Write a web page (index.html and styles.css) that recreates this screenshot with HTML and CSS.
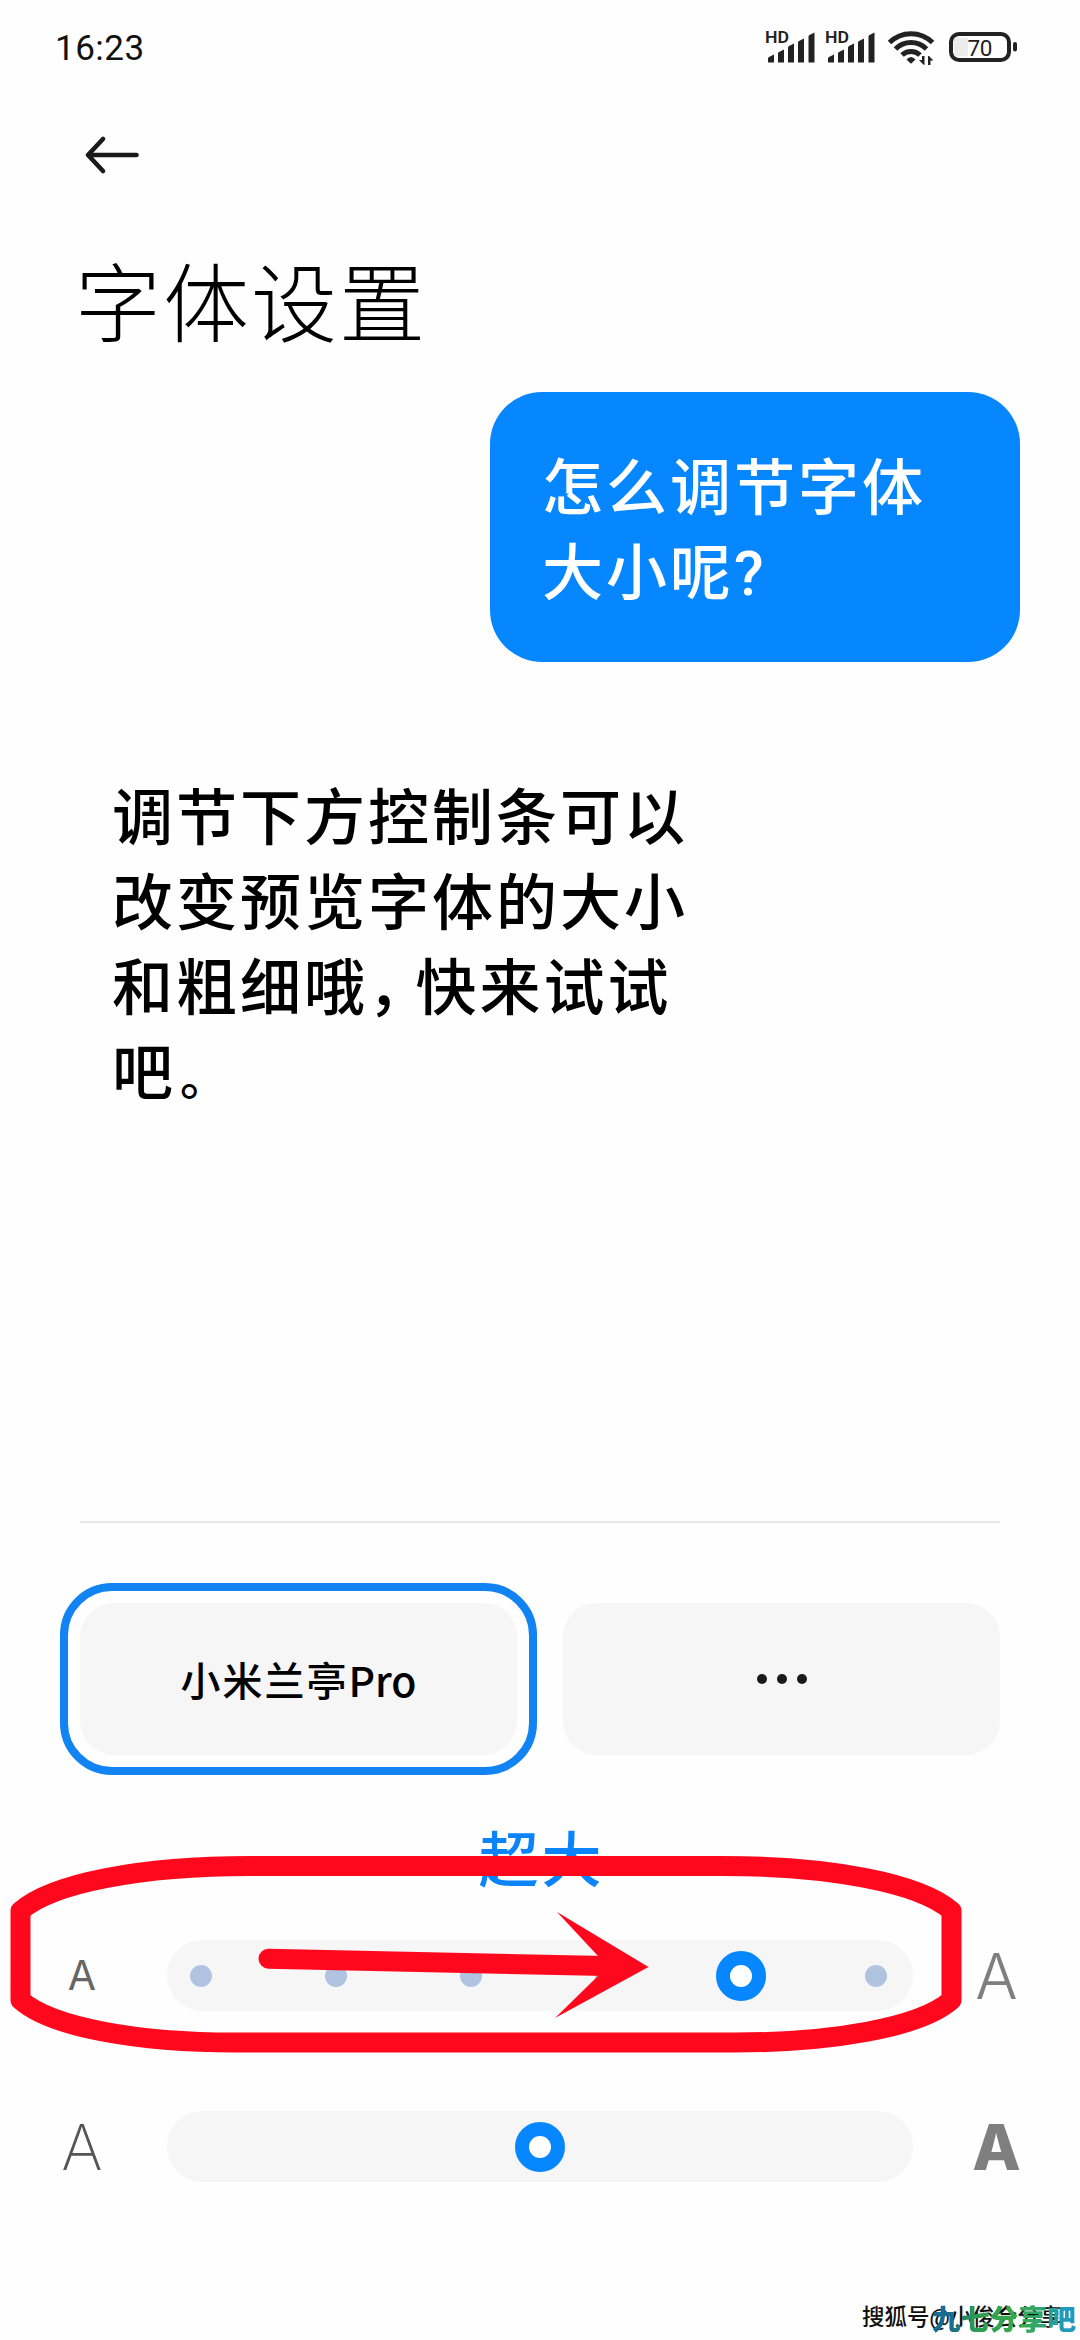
FILE: index.html
```html
<!DOCTYPE html>
<html lang="zh-CN">
<head>
  <meta charset="UTF-8" />
  <title>字体设置</title>
  <link rel="stylesheet" href="styles.css">
</head>
<body>

  <div class="status-bar">
    <span class="time">16:23</span>
    <svg class="status-icons" width="260" height="44" viewBox="764 25 260 44">
      <g id="signal">
        <text class="hd" x="765" y="43" textLength="24" lengthAdjust="spacingAndGlyphs">HD</text>
        <path d="M768 62.5v-4q0-1 1-1.500l5-2.500v8zM778 62.500v-9q0-1 1-1.500l5-2.500v13zM788 62.500v-15q0-1 1-1.500l5-2.500v19zM798 62.500v-20q0-1 1-1.500l5-2.500v24zM808.500 62.500v-26q0-1 1-1.500l5-2.500v30z" />
      </g>
      <use href="#signal" x="60" />
      <g class="wifi">
        <path d="M889.500 42.500A30.500 30.500 0 0 1 932.500 42.500" />
        <path d="M895.500 49A22 22 0 0 1 926.500 49" />
        <path d="M902 55A13 13 0 0 1 920 55" />
      </g>
      <path d="M906.500 59.500Q911 54.500 915.500 59.500L911 63.800z" />
      <path d="M924.500 56v8.800h-1L919 60h3v-4zM928 65v-9h1l4.500 4.500h-3V65z" />
      <rect class="battery" x="951" y="34" width="58" height="26" rx="8" />
      <rect class="charge" x="954" y="37.500" width="14" height="19" rx="3" />
      <rect x="1013" y="42" width="4" height="9.500" rx="2" />
      <text class="percent" x="967.500" y="55.500" textLength="25">70</text>
    </svg>
  </div>

  <div class="back">
    <svg width="56" height="40" viewBox="0 0 56 40">
      <path d="M52.500 20H4M19 4L4 20l15 16" />
    </svg>
  </div>

  <h1 class="title">字体设置</h1>

  <div class="preview">
    <div class="question">怎么调节字体<br>大小呢?</div>
    <div class="answer">调节下方控制条可以<br>改变预览字体的大小<br>和粗细哦<span class="comma">，</span>快来试试<br>吧<span class="period">。</span></div>
  </div>

  <div class="fonts">
    <div class="font-ring">
      <div class="font-card">小米兰亭<span class="latin">Pro</span></div>
    </div>
    <div class="font-card more"><i></i><i></i><i></i></div>
  </div>

  <div class="size-name">超大</div>

  <div class="slider">
    <span class="letter small">A</span>
    <div class="track stops">
      <span class="stop"></span>
      <span class="stop"></span>
      <span class="stop"></span>
      <span class="stop"></span>
      <span class="thumb"></span>
      <span class="stop"></span>
    </div>
    <span class="letter large">A</span>
  </div>

  <div class="slider weight">
    <span class="letter thin">A</span>
    <div class="track"><span class="thumb"></span></div>
    <span class="letter bold">A</span>
  </div>

  <!-- red marker around the size slider -->
  <svg class="marker" width="1080" height="220" viewBox="0 1840 1080 220">
    <path class="loop" d="M250 1866H722C830 1866 920 1883 951.500 1911V2000C920 2028 830 2042.500 735 2042.500H235C140 2042.500 52 2028 20.500 2000V1911C52 1883 142 1866 250 1866z" />
    <path class="shaft" d="M268.500 1958.700L605 1966" />
    <path class="head" d="M557 1912L648.500 1967L555 2018L598 1976V1956z" />
  </svg>

  <div class="source">搜狐号@小俊会分享</div>
  <div class="site">九七分享吧</div>

</body>
</html>
```
FILE: styles.css
```css
* {
  box-sizing: border-box;
}
body {
  margin: 0;
  position: relative;
  width: 1080px;
  height: 2340px;
  overflow: hidden;
  background: #fefefe;
  color: #000;
  font-family: Roboto, "Noto Sans CJK SC", sans-serif;
}
.status-bar {
  display: flex;
  justify-content: space-between;
  height: 94px;
  padding: 25px 56px 0 55px;
}
.time {
  font-size: 35px;
  line-height: 47px;
  font-weight: 400;
  letter-spacing: 0.500px;
  color: #111;
}
.status-icons {
  fill: #222;
}
.hd {
  font-size: 17px;
  font-weight: 600;
}
.wifi {
  fill: none;
  stroke: #222;
  stroke-width: 5;
}
.battery {
  fill: none;
  stroke: #222;
  stroke-width: 4;
}
.charge {
  fill: #ececec;
}
.percent {
  font-size: 22.500px;
}
.back {
  height: 122px;
  padding: 41px 0 0 84px;
}
.back path {
  fill: none;
  stroke: #1a1a1a;
  stroke-width: 4.600px;
  stroke-linecap: round;
  stroke-linejoin: round;
}
.title {
  margin: 31px 0 0 75px;
  height: 145px;
  font-size: 86px;
  line-height: 120px;
  font-weight: 300;
  letter-spacing: 2px;
}
.preview {
  display: flex;
  flex-direction: column;
  width: 920px;
  height: 1131px;
  margin-left: 80px;
  border-bottom: 2px solid #e8e8e8;
}
.question {
  align-self: flex-end;
  width: 530px;
  height: 270px;
  margin-right: -20px;
  padding: 55px 52px 0;
  border-radius: 52px;
  background: #0686ff;
  color: #fff;
}
.question,
.answer {
  font-size: 61px;
  line-height: 85px;
  font-weight: 500;
  letter-spacing: 3px;
}
.answer {
  margin: 115px 0 0 32px;
}
.comma {
  font-feature-settings: "halt";
  margin-right: 14px;
}
.period {
  margin-left: 4px;
  font-size: 48px;
  line-height: 1;
}
.fonts {
  display: flex;
  align-items: center;
  gap: 26px;
  margin: 60px 80px 0 60px;
}
.font-ring {
  padding: 12px;
  border: 8px solid #1283f2;
  border-radius: 52px;
}
.font-card {
  display: flex;
  align-items: center;
  justify-content: center;
  width: 437px;
  height: 152px;
  border-radius: 34px;
  background: #f6f6f6;
  font-size: 40px;
  font-weight: 500;
  letter-spacing: 2px;
}
.latin {
  font-family: "Noto Sans CJK SC", sans-serif;
  font-size: 41px;
  font-weight: 500;
  letter-spacing: 0;
}
.more {
  gap: 10px;
}
.more i {
  width: 10px;
  height: 10px;
  border-radius: 50%;
  background: #1a1a1a;
}
.size-name {
  height: 165px;
  padding: 44px 0 0 3px;
  text-align: center;
  font-size: 60px;
  line-height: 85px;
  font-weight: 500;
  letter-spacing: 3px;
  color: #0b84fb;
}
.slider {
  display: flex;
  align-items: center;
  height: 71px;
}
.weight {
  margin-top: 100px;
}
.letter {
  width: 167px;
  text-align: center;
  color: #7f7f7f;
  font-family: Inter, sans-serif;
  font-size: 63px;
  line-height: 71px;
}
.small {
  padding-right: 3px;
  font-size: 41px;
  color: #666;
}
.large {
  padding-top: 2px;
  font-weight: 300;
}
.thin {
  padding: 2px 3px 0 0;
  font-weight: 200;
  color: #555;
}
.bold {
  padding-top: 2px;
  font-weight: 800;
}
.track {
  display: flex;
  align-items: center;
  justify-content: center;
  flex: 0 0 746px;
  height: 71px;
  border-radius: 36px;
  background: #f6f6f6;
}
.stops {
  justify-content: space-between;
  padding: 0 12px 0 9px;
}
.stop {
  width: 22px;
  height: 22px;
  margin: 0 14px;
  border-radius: 50%;
  background: #b0c4e2;
}
.thumb {
  width: 50px;
  height: 50px;
  border: 14px solid #0686ff;
  border-radius: 50%;
  background: #fff;
}
.marker {
  position: absolute;
  left: 0;
  top: 1840px;
}
.loop,
.shaft {
  fill: none;
  stroke: #ff081d;
  stroke-width: 20;
  stroke-linejoin: round;
}
.shaft {
  stroke-linecap: round;
}
.head {
  fill: #ff081d;
}
.source {
  position: absolute;
  left: 862px;
  top: 2301px;
  font-size: 22.500px;
  line-height: 33px;
  font-weight: 500;
  white-space: nowrap;
  color: #111;
}
.site {
  position: absolute;
  left: 932px;
  top: 2300px;
  font-size: 28.800px;
  line-height: 40px;
  font-weight: 900;
  white-space: nowrap;
  color: transparent;
  background: linear-gradient(90deg, #176a90 12%, #2b9b55 30%, #3aab4a 60%, #2aa578 78%, #219abf 92%);
  background-clip: text;
  -webkit-background-clip: text;
}
```
